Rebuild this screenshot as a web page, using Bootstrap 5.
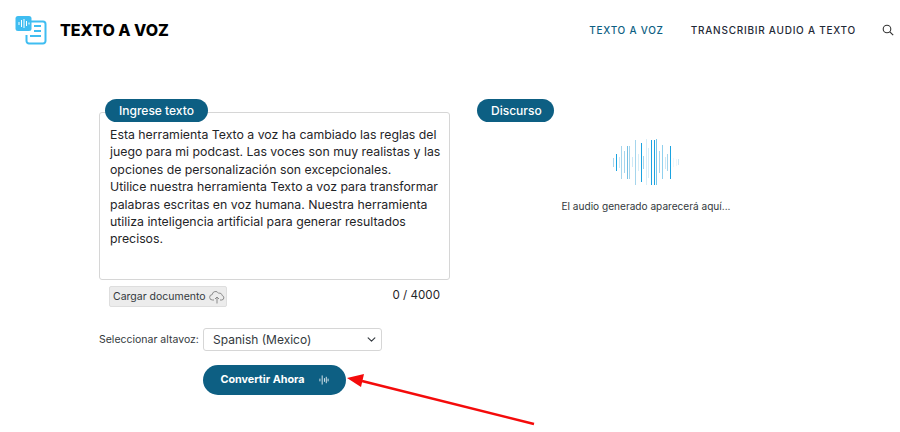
<!DOCTYPE html>
<html lang="es">
<head>
    <meta charset="UTF-8">
    <meta name="viewport" content="width=device-width, initial-scale=1.0">
    <title>Texto a voz</title>
    <link href="https://cdn.jsdelivr.net/npm/bootstrap@5.3.0/dist/css/bootstrap.min.css" rel="stylesheet">
    <style>
        body {
            font-family: Inter, "Open Sans", sans-serif;
            color: #1f2528;
            background: #fff;
            overflow: hidden;
            height: 432px;
        }
        .top-bar {
            height: 60px;
            padding: 0 6px 0 15px;
        }
        .brand-name {
            font-size: 16px;
            font-weight: 800;
            color: #000;
            letter-spacing: 0;
            margin-left: 13px;
        }
        .top-bar .nav-link {
            font-size: 10px;
            font-weight: 500;
            letter-spacing: .75px;
            color: #1f2a37;
            padding: 0;
        }
        .top-bar .nav-link.active {
            color: #0d5f83;
        }
        .top-bar .nav-link + .nav-link {
            margin-left: 27px;
        }
        .search-icon {
            margin-left: 26px;
        }
        .main-area {
            padding-left: 99px;
            margin-top: 39px;
        }
        .left-side {
            width: 351px;
        }
        .right-side {
            margin-left: 27px;
            width: 338px;
        }
        .pill-title {
            display: block;
            position: relative;
            background: #0d5f83;
            color: #fff;
            font-size: 12px;
            font-weight: 500;
            line-height: 23px;
            height: 23px;
            border-radius: 12px;
            padding: 0 14px;
            white-space: nowrap;
        }
        .left-side .pill-title {
            margin-left: 6px;
            width: 103px;
            margin-bottom: -10px;
            z-index: 2;
        }
        .right-side .pill-title {
            width: 77px;
        }
        .text-box {
            height: 168px;
            resize: none;
            font-size: 12.3px;
            line-height: 17.4px;
            padding: 13px 5px 0 10px;
            border: 1px solid #d6d6d6;
            border-radius: 3px;
            overflow: hidden;
        }
        .text-box::placeholder {
            color: #1f2528;
            opacity: 1;
        }
        .under-box {
            padding: 6px 10px 0 10px;
        }
        .upload-btn {
            background: #ececec;
            border: 1px solid #dedede;
            border-radius: 2px;
            color: #33393d;
            font-size: 10.5px;
            line-height: 19px;
            height: 21px;
            padding: 0 1px 0 3px;
            gap: 3px;
        }
        .char-count {
            font-size: 11.6px;
            margin-top: 1px;
        }
        .speaker-row {
            margin-top: 21px;
        }
        .speaker-row label {
            font-size: 10.5px;
            color: #33393d;
            width: 104px;
            white-space: nowrap;
        }
        .speaker-select {
            width: 179px;
            height: 23px;
            font-size: 12px;
            line-height: 1;
            padding: 0 9px;
            border: 1px solid #d6d6d6;
            border-radius: 3px;
            color: #33393d;
            background-position: right 4px center;
            background-size: 11px 9px;
        }
        .convert-btn {
            background: #0d5f83;
            color: #fff;
            border: 0;
            border-radius: 15px;
            height: 30px;
            width: 143px;
            margin-left: 104px;
            margin-top: 14px;
            font-size: 10.8px;
            font-weight: 700;
            gap: 14px;
        }
        .wave-box {
            margin-top: 8px;
            text-align: center;
        }
        .wave-box svg {
            display: block;
            margin: 0 auto;
        }
        .wave-note {
            font-size: 10.1px;
            color: #33393d;
            margin-top: 5px;
        }
        .red-arrow {
            position: absolute;
            left: 0;
            top: 0;
            pointer-events: none;
        }
    </style>
</head>
<body>
    <!-- Header -->
    <nav class="top-bar d-flex align-items-center justify-content-between">
        <a class="d-flex align-items-center text-decoration-none" href="#">
            <svg width="32" height="30" viewBox="0 0 32 30">
                <path d="M13 6.500h15a2.500 2.500 0 0 1 2.500 2.500v17a2.500 2.500 0 0 1-2.500 2.500H14a2.500 2.500 0 0 1-2.500-2.500V20" fill="none" stroke="#3fbdf1" stroke-width="2"/>
                <rect x="0.500" y="1" width="16" height="15" rx="2.500" fill="#3fbdf1"/>
                <path d="M4 7v3M6.500 5v7M9 4v9M11.500 6v5M14 7.500v2" stroke="#fff" stroke-width="1"/>
                <path d="M19 11h7M19 16h7M15 21h11" stroke="#3fbdf1" stroke-width="2"/>
            </svg>
            <span class="brand-name">TEXTO A VOZ</span>
        </a>
        <div class="d-flex align-items-center">
            <a class="nav-link active" href="#">TEXTO A VOZ</a>
            <a class="nav-link" href="#">TRANSCRIBIR AUDIO A TEXTO</a>
            <svg class="search-icon" width="12" height="12" viewBox="0 0 12 12">
                <circle cx="5" cy="5" r="3.800" fill="none" stroke="#333" stroke-width="1.100"/>
                <path d="M7.800 7.800l3.400 3.400" stroke="#333" stroke-width="1.200"/>
            </svg>
        </div>
    </nav>

    <!-- Main -->
    <div class="main-area d-flex">
        <div class="left-side">
            <span class="pill-title">Ingrese texto</span>
            <textarea class="form-control text-box" placeholder="Esta herramienta Texto a voz ha cambiado las reglas del juego para mi podcast. Las voces son muy realistas y las opciones de personalización son excepcionales.
Utilice nuestra herramienta Texto a voz para transformar palabras escritas en voz humana. Nuestra herramienta utiliza inteligencia artificial para generar resultados precisos."></textarea>
            <div class="under-box d-flex justify-content-between align-items-start">
                <button class="upload-btn d-flex align-items-center" type="button">
                    Cargar documento
                    <svg width="16" height="14" viewBox="0 0 16 14">
                        <path d="M5 10H3.500a2.700 2.700 0 0 1-.3-5.400 3.400 3.400 0 0 1 6.400-1.300 2.700 2.700 0 0 1 3.600 2.200 2.300 2.300 0 0 1-.5 4.500H11" fill="none" stroke="#8a8a8a"/>
                        <path d="M8 13.500V7M6 9l2-2 2 2" fill="none" stroke="#8a8a8a"/>
                    </svg>
                </button>
                <span class="char-count">0 / 4000</span>
            </div>
            <div class="speaker-row d-flex align-items-center">
                <label for="altavoz">Seleccionar altavoz:</label>
                <select id="altavoz" class="form-select speaker-select">
                    <option>Spanish (Mexico)</option>
                </select>
            </div>
            <button class="convert-btn d-flex align-items-center justify-content-center" type="button">
                Convertir Ahora
                <svg width="10" height="12" viewBox="0 0 11 12">
                    <path d="M1 4.500v3M3.500 1v10M6 4v4M8 2.500v7M10 4.500v3" stroke="#fff" stroke-width=".9" fill="none"/>
                </svg>
            </button>
        </div>
        <div class="right-side">
            <span class="pill-title">Discurso</span>
            <div class="wave-box">
                <svg id="wave" width="68" height="64" viewBox="12 0 68 64"></svg>
                <div class="wave-note">El audio generado aparecerá aquí...</div>
            </div>
        </div>
    </div>

    <svg class="red-arrow" width="900" height="432" viewBox="0 0 900 432">
        <path d="M534 424L362 381" stroke="#f40b0b" stroke-width="2.500"/>
        <path d="M347 378L364 374L361 387Z" fill="#f40b0b"/>
    </svg>

    <script src="https://cdn.jsdelivr.net/npm/bootstrap@5.3.0/dist/js/bootstrap.bundle.min.js"></script>
    <script>
        // x, top, bottom, colour of each bar, read from the reference
        const bars = [
            [13, 28, 37, "#a5d5ec"], [16, 24, 41, "#1ba3e0"], [19, 27, 38, "#cfe9f6"],
            [21, 16, 49, "#a5d5ec"], [24, 21, 43, "#a5d5ec"], [27, 16, 49, "#76bfe3"],
            [29, 16, 49, "#a5d5ec"], [32, 27, 37, "#cfe9f6"], [35, 10, 55, "#a5d5ec"],
            [38, 24, 41, "#d8eef8"], [41, 13, 52, "#1ba3e0"], [43, 26, 39, "#a5d5ec"],
            [46, 9, 55, "#d8eef8"], [48, 18, 48, "#d8eef8"], [51, 10, 55, "#1ba3e0"],
            [54, 10, 55, "#1ba3e0"], [56, 9, 55, "#76c8ea"], [59, 21, 43, "#a5d5ec"],
            [62, 15, 49, "#8fd0ee"], [65, 27, 39, "#cfe9f6"], [67, 24, 41, "#a5d5ec"],
            [70, 16, 49, "#1ba3e0"], [73, 28, 37, "#eef7fc"], [76, 29, 36, "#eef7fc"], [78, 29, 35, "#cfe9f6"]
        ];
        document.getElementById("wave").innerHTML = bars.map(b =>
            `<rect x="${b[0]}" y="${b[1]}" width="1" height="${b[2] - b[1]}" fill="${b[3]}"/>`
        ).join("");
    </script>
</body>
</html>
